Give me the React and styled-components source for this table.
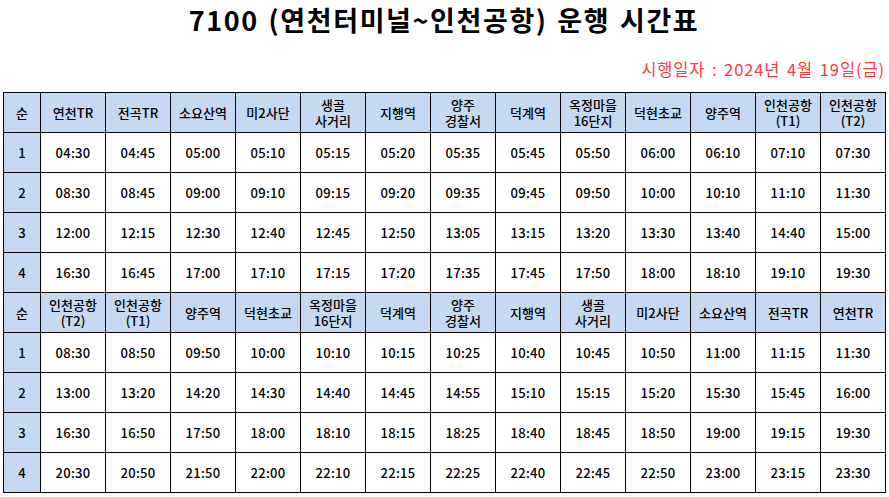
import styled, { createGlobalStyle } from "styled-components";

const Global = createGlobalStyle`
  body {
    margin: 0;
    background: #fff;
    font-family: "Noto Sans CJK KR", "Noto Sans", sans-serif;
  }
`;

const upper = {
  stops: ["연천TR", "전곡TR", "소요산역", "미2사단", "생골\n사거리", "지행역", "양주\n경찰서", "덕계역", "옥정마을\n16단지", "덕현초교", "양주역", "인천공항\n(T1)", "인천공항\n(T2)"],
  rows: [
    ["04:30", "04:45", "05:00", "05:10", "05:15", "05:20", "05:35", "05:45", "05:50", "06:00", "06:10", "07:10", "07:30"],
    ["08:30", "08:45", "09:00", "09:10", "09:15", "09:20", "09:35", "09:45", "09:50", "10:00", "10:10", "11:10", "11:30"],
    ["12:00", "12:15", "12:30", "12:40", "12:45", "12:50", "13:05", "13:15", "13:20", "13:30", "13:40", "14:40", "15:00"],
    ["16:30", "16:45", "17:00", "17:10", "17:15", "17:20", "17:35", "17:45", "17:50", "18:00", "18:10", "19:10", "19:30"],
  ],
};

const lower = {
  stops: ["인천공항\n(T2)", "인천공항\n(T1)", "양주역", "덕현초교", "옥정마을\n16단지", "덕계역", "양주\n경찰서", "지행역", "생골\n사거리", "미2사단", "소요산역", "전곡TR", "연천TR"],
  rows: [
    ["08:30", "08:50", "09:50", "10:00", "10:10", "10:15", "10:25", "10:40", "10:45", "10:50", "11:00", "11:15", "11:30"],
    ["13:00", "13:20", "14:20", "14:30", "14:40", "14:45", "14:55", "15:10", "15:15", "15:20", "15:30", "15:45", "16:00"],
    ["16:30", "16:50", "17:50", "18:00", "18:10", "18:15", "18:25", "18:40", "18:45", "18:50", "19:00", "19:15", "19:30"],
    ["20:30", "20:50", "21:50", "22:00", "22:10", "22:15", "22:25", "22:40", "22:45", "22:50", "23:00", "23:15", "23:30"],
  ],
};

export default function App() {
  return (
    <Page>
      <Global />
      <Title>7100 (연천터미널~인천공항) 운행 시간표</Title>
      <DateLine>시행일자&nbsp;: 2024년 4월 19일(금)</DateLine>
      <Table>
        <colgroup>
          <col style={{ width: 37 }} />
          {upper.stops.map((_, i) => <col key={i} style={{ width: 65 }} />)}
        </colgroup>
        <tbody>
          {[upper, lower].map((part, p) => (
            <Section key={p} part={part} />
          ))}
        </tbody>
      </Table>
    </Page>
  );
}

function Section({ part }) {
  return (
    <>
      <tr>
        <Head>순</Head>
        {part.stops.map((s) => <Head key={s}>{s}</Head>)}
      </tr>
      {part.rows.map((row, i) => (
        <tr key={i}>
          <Head>{i + 1}</Head>
          {row.map((t, j) => <Cell key={j}>{t}</Cell>)}
        </tr>
      ))}
    </>
  );
}

const Page = styled.div`
  width: 889px;
  padding: 3px 4px 0 3px;
  box-sizing: border-box;
`;

const Title = styled.h1`
  margin: 0;
  text-align: center;
  font-size: 27px;
  font-weight: 700;
  line-height: 34px;
  color: #000;
  letter-spacing: 1.6px;
  word-spacing: 2px;
`;

const DateLine = styled.div`
  text-align: right;
  color: #ff3a3a;
  font-size: 16.5px;
  line-height: 22px;
  margin-top: 21px;
  margin-bottom: 12px;
  padding-right: 0;
  letter-spacing: 0.9px;
  word-spacing: 2px;
`;

const Table = styled.table`
  border-collapse: collapse;
  table-layout: fixed;
  width: 882px;
  font-size: 13px;
  font-weight: 500;
`;

const Head = styled.td`
  background: #c5d9f1;
  border: 1px solid #000;
  height: 39px;
  padding: 0;
  text-align: center;
  vertical-align: middle;
  white-space: pre-line;
  line-height: 16px;
  color: #000;
`;

const Cell = styled.td`
  border: 1px solid #000;
  height: 39px;
  padding: 0;
  text-align: center;
  vertical-align: middle;
  color: #000;
  letter-spacing: 0.3px;
`;
